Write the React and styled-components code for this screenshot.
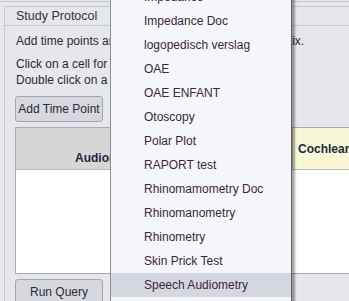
import React from "react";
import styled, { createGlobalStyle } from "styled-components";

const GlobalStyle = createGlobalStyle`
  html, body {
    margin: 0;
    padding: 0;
    background: #e6e7ec;
    overflow: hidden;
  }
  body {
    font-family: "Liberation Sans", Arial, sans-serif;
    font-size: 12px;
    color: #2b2b2f;
  }
`;

const menuItems = [
  "Impedance",
  "Impedance Doc",
  "logopedisch verslag",
  "OAE",
  "OAE ENFANT",
  "Otoscopy",
  "Polar Plot",
  "RAPORT test",
  "Rhinomamometry Doc",
  "Rhinomanometry",
  "Rhinometry",
  "Skin Prick Test",
  "Speech Audiometry",
  "Tympanometry",
];

const App = () => {
  return (
    <Page>
      <GlobalStyle />
      <TopStrip />
      <Panel>
        <PanelHeader>Study Protocol</PanelHeader>
        <PanelBody>
          <Para>Add time points and then select the tests in the matrix.</Para>
          <Para>
            Click on a cell for adding a test.
            <br />
            Double click on a cell to remove it.
          </Para>
          <Button>Add Time Point</Button>
          <Table>
            <HeaderRow>
              <HeaderCell>Audiometry</HeaderCell>
              <HeaderCell $accent>Cochlear Implant</HeaderCell>
            </HeaderRow>
            <TableBody />
          </Table>
          <Button>Run Query</Button>
        </PanelBody>
      </Panel>

      <Menu>
        {menuItems.map((item) => (
          <MenuItem key={item} $active={item === "Speech Audiometry"}>
            {item}
          </MenuItem>
        ))}
      </Menu>
    </Page>
  );
};

const Page = styled.div`
  position: relative;
  width: 349px;
  height: 301px;
  overflow: hidden;
`;

const TopStrip = styled.div`
  height: 1px;
  border-bottom: 1px solid #c6c8cf;
`;

const Panel = styled.section`
  margin: 4px 0 0 4px;
  border-left: 1px solid #c6c8cf;
  border-top: 1px solid #c6c8cf;
`;

const PanelHeader = styled.div`
  height: 18px;
  line-height: 19px;
  padding-left: 11px;
  font-size: 12.5px;
  color: #333338;
  border-bottom: 1px solid #c6c8cf;
`;

const PanelBody = styled.div`
  padding: 7px 0 0 10px;
  display: flex;
  flex-direction: column;
  align-items: flex-start;
`;

const Para = styled.p`
  margin: 0 0 7px 1px;
  line-height: 16px;
  white-space: nowrap;

  & + & {
    margin-bottom: 8px;
  }
`;

const Button = styled.button`
  width: 88px;
  height: 26px;
  padding: 0;
  font-family: "Liberation Sans", Arial, sans-serif;
  font-size: 12px;
  color: #2b2b30;
  background: #d6d7df;
  border: 1px solid #a3a5b0;
  border-radius: 3px;
`;

const Table = styled.div`
  margin: 5px 0 5px 0;
  width: 340px;
  border: 1px solid #a9abb2;
  border-right: none;
  display: flex;
  flex-direction: column;
`;

const HeaderRow = styled.div`
  display: flex;
  height: 41px;
  border-bottom: 1px solid #b9bbc0;
`;

const HeaderCell = styled.div`
  display: flex;
  font-weight: bold;
  color: #1d2a3d;
  white-space: nowrap;
  overflow: hidden;
  ${({ $accent }) =>
    $accent
      ? `
    flex: 1 1 auto;
    min-width: 0;
    align-items: center;
    padding-left: 5px;
    background: #f8f8d6;
    border-left: 1px solid #c9c9b0;
  `
      : `
    flex: 0 0 auto;
    width: 217px;
    align-items: flex-end;
    padding: 0 0 4px 59px;
    background: #d6d6d7;
  `}
`;

const TableBody = styled.div`
  height: 103px;
  background: #ffffff;
`;

const Menu = styled.ul`
  position: absolute;
  left: 110px;
  top: -15px;
  width: 180px;
  margin: 0;
  padding: 0;
  list-style: none;
  background: #f5f6fa;
  border-left: 1px solid #8d8f98;
  border-right: 1px solid #5f616a;
  box-shadow: 3px 0 2px rgba(0, 0, 0, 0.35);
`;

const MenuItem = styled.li`
  height: 24px;
  line-height: 24px;
  padding-left: 33px;
  color: #3a2836;
  white-space: nowrap;
  background: ${({ $active }) => ($active ? "#d5d7e0" : "transparent")};
`;

export default App;
